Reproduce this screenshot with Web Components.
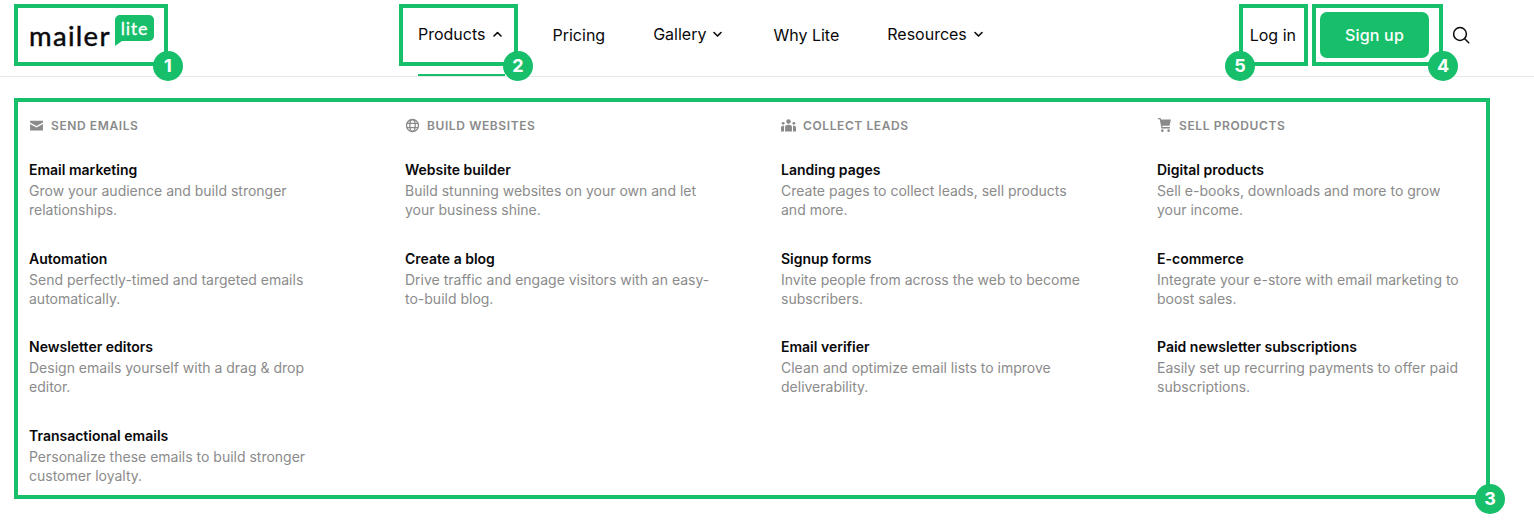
<!DOCTYPE html>
<html lang="en">
<head>
<meta charset="utf-8">
<title>MailerLite products menu</title>
<style>
  html, body { margin: 0; background: #fff; }
  body { font-family: Inter, "Liberation Sans", sans-serif; color: #09090b; position: relative; height: 520px; overflow: hidden; }
</style>
</head>
<body>
<site-header>
  <nav-item active chevron="up">Products</nav-item>
  <nav-item low>Pricing</nav-item>
  <nav-item chevron="down">Gallery</nav-item>
  <nav-item low>Why Lite</nav-item>
  <nav-item chevron="down">Resources</nav-item>
</site-header>
<mega-menu>
  <menu-column heading="Send emails" icon="mail">
    <menu-entry title="Email marketing">Grow your audience and build stronger<br>relationships.</menu-entry>
    <menu-entry title="Automation">Send perfectly-timed and targeted emails<br>automatically.</menu-entry>
    <menu-entry title="Newsletter editors">Design emails yourself with a drag &amp; drop<br>editor.</menu-entry>
    <menu-entry title="Transactional emails">Personalize these emails to build stronger<br>customer loyalty.</menu-entry>
  </menu-column>
  <menu-column heading="Build websites" icon="globe">
    <menu-entry title="Website builder">Build stunning websites on your own and let<br>your business shine.</menu-entry>
    <menu-entry title="Create a blog">Drive traffic and engage visitors with an easy-<br>to-build blog.</menu-entry>
  </menu-column>
  <menu-column heading="Collect leads" icon="people">
    <menu-entry title="Landing pages">Create pages to collect leads, sell products<br>and more.</menu-entry>
    <menu-entry title="Signup forms">Invite people from across the web to become<br>subscribers.</menu-entry>
    <menu-entry title="Email verifier">Clean and optimize email lists to improve<br>deliverability.</menu-entry>
  </menu-column>
  <menu-column heading="Sell products" icon="cart">
    <menu-entry title="Digital products">Sell e-books, downloads and more to grow<br>your income.</menu-entry>
    <menu-entry title="E-commerce">Integrate your e-store with email marketing to<br>boost sales.</menu-entry>
    <menu-entry title="Paid newsletter subscriptions">Easily set up recurring payments to offer paid<br>subscriptions.</menu-entry>
  </menu-column>
</mega-menu>

<!-- annotation frames lie over the page -->
<note-frame n="1" x="14" y="4" w="154" h="62"></note-frame>
<note-frame n="2" x="399" y="4" w="119" h="62"></note-frame>
<note-frame n="3" x="14" y="98" w="1476" h="401"></note-frame>
<note-frame n="4" x="1312" y="4" w="131" h="62"></note-frame>
<note-frame n="5" x="1239" y="4" w="69" h="62" badge="left"></note-frame>

<script>
const GREEN = '#17bf6b';

class SiteHeader extends HTMLElement {
  constructor() {
    super();
    this.attachShadow({ mode: 'open' });
  }
  connectedCallback() {
    this.shadowRoot.innerHTML = `
      <style>
        :host { display: flex; align-items: center; height: 76px; border-bottom: 1px solid #e8e8e8; box-sizing: content-box; }
        .logo { display: flex; align-items: flex-start; width: 418px; padding-left: 29px; box-sizing: border-box; height: 76px; flex: none; }
        .word { font: 400 27.5px/1 Lato, sans-serif; -webkit-text-stroke: .45px #09090b; letter-spacing: 1.3px; color: #09090b; margin-top: 22px; width: 80px; }
        .bubble { position: relative; margin: 15px 0 0 6px; width: 39px; height: 31px; }
        .bubble svg { display: block; }
        .bubble span { position: absolute; left: 0; right: 0; top: 3px; text-align: center; font: 400 18px/20px Lato, sans-serif; -webkit-text-stroke: .3px #fff; letter-spacing: .8px; color: #fff; }
        nav { display: flex; gap: 48px; flex: none; }
        .right { margin-left: auto; display: flex; align-items: center; padding: 0 64px 6px 0; }
        .login { font-size: 16px; line-height: 24px; margin: 0 24px 0 2px; }
        .signup { width: 109px; height: 46px; border-radius: 7px; background: ${GREEN}; color: #fff; font-size: 16px; font-weight: 500; display: flex; align-items: center; justify-content: center; letter-spacing: .2px; }
        .search { margin-left: 23px; display: block; }
      </style>
      <div class="logo">
        <span class="word">mailer</span>
        <span class="bubble">
          <svg width="39" height="31" viewBox="0 0 39 31"><path d="M5 0h29a5 5 0 0 1 5 5v16a5 5 0 0 1-5 5H7l-7 5V5a5 5 0 0 1 5-5z" fill="${GREEN}"/></svg>
          <span>lite</span>
        </span>
      </div>
      <nav><slot></slot></nav>
      <div class="right">
        <span class="login">Log in</span>
        <span class="signup">Sign up</span>
        <svg class="search" width="18" height="18" viewBox="0 0 18 18" fill="none" stroke="#09090b" stroke-width="1.5" stroke-linecap="round"><circle cx="8" cy="8" r="6.4"/><path d="M12.7 12.7l4 4"/></svg>
      </div>`;
  }
}

class NavItem extends HTMLElement {
  constructor() {
    super();
    this.attachShadow({ mode: 'open' });
  }
  connectedCallback() {
    const dir = this.getAttribute('chevron');
    const path = dir === 'up' ? 'M1 5l3.5-3.5L8 5' : 'M1 1.5L4.5 5 8 1.5';
    const chev = dir ? `<svg width="9" height="7" viewBox="0 0 9 7" fill="none" stroke="#09090b" stroke-width="1.6" stroke-linecap="round" stroke-linejoin="round"><path d="${path}"/></svg>` : '';
    this.shadowRoot.innerHTML = `
      <style>
        :host { display: flex; align-items: center; gap: 7px; height: 76px; font-size: 16px; position: relative; padding-right: ${dir ? 3 : 0}px; }
        .t { line-height: 24px; margin-top: ${this.hasAttribute('low') ? -6 : -8}px; }
        svg { margin-top: -8px; }
        :host([active])::after { content: ""; position: absolute; left: 0; right: 0; bottom: 0; height: 2px; background: ${GREEN}; }
      </style>
      <span class="t"><slot></slot></span>${chev}`;
  }
}

class MegaMenu extends HTMLElement {
  constructor() {
    super();
    this.attachShadow({ mode: 'open' });
    this.shadowRoot.innerHTML = `
      <style>
        :host { display: grid; grid-template-columns: repeat(4, 376px); padding: 38px 0 0 29px; }
      </style>
      <slot></slot>`;
  }
}

const ICONS = {
  mail: '<path d="M1 2.5h12v1.6L7 7.4 1 4.1z"/><path d="M1 5.6l6 3.3 6-3.3v6H1z"/>',
  globe: '<g fill="none" stroke="currentColor" stroke-width="1.2"><circle cx="7" cy="7" r="5.6"/><ellipse cx="7" cy="7" rx="2.5" ry="5.6"/><path d="M1.6 5h10.8M1.6 9h10.8"/></g>',
  people: '<circle cx="7" cy="3.2" r="2.1"/><path d="M3.8 12.5V8.4c0-1.4 1.2-2.2 3.2-2.2s3.2.8 3.2 2.2v4.1z"/><circle cx="2" cy="5" r="1.3"/><circle cx="12" cy="5" r="1.3"/><path d="M0 12.5V8.8c0-1 .8-1.6 2.8-1.6v5.3zM14 12.5V8.8c0-1-.8-1.6-2.8-1.6v5.3z"/>',
  cart: '<path d="M1 0h2.3l.5 1.5H13l-1.3 5.8H4.9l.3 1.2h6.9v1.2H4.2L2.5 1.2H1z"/><circle cx="5" cy="11.8" r="1.2"/><circle cx="10.8" cy="11.8" r="1.2"/>'
};

class MenuColumn extends HTMLElement {
  constructor() {
    super();
    this.attachShadow({ mode: 'open' });
  }
  connectedCallback() {
    const icon = this.getAttribute('icon');
    this.shadowRoot.innerHTML = `
      <style>
        :host { display: block; }
        h4 { margin: 0 0 25px; display: flex; align-items: center; gap: 7px; height: 20px; font-size: 12px; font-weight: 600; letter-spacing: .6px; text-transform: uppercase; color: #8a8a8a; }
        svg { flex: none; display: block; }
        .list { display: flex; flex-direction: column; gap: 29.7px; }
      </style>
      <h4><svg width="15" height="15" viewBox="0 0 14 14" fill="currentColor">${ICONS[icon]}</svg>${this.getAttribute('heading')}</h4>
      <div class="list"><slot></slot></div>`;
  }
}

class MenuEntry extends HTMLElement {
  constructor() {
    super();
    this.attachShadow({ mode: 'open' });
  }
  connectedCallback() {
    this.shadowRoot.innerHTML = `
      <style>
        :host { display: block; }
        .title { font-size: 14px; font-weight: 600; line-height: 20px; color: #09090b; margin-bottom: 1px; }
        .desc { font-size: 14px; line-height: 19px; color: #8b8b8b; width: 340px; white-space: nowrap; }
      </style>
      <div class="title">${this.getAttribute('title')}</div>
      <div class="desc"><slot></slot></div>`;
  }
}

class NoteFrame extends HTMLElement {
  constructor() {
    super();
    this.attachShadow({ mode: 'open' });
  }
  connectedCallback() {
    const g = n => this.getAttribute(n);
    const left = g('badge') === 'left';
    this.shadowRoot.innerHTML = `
      <style>
        :host { position: absolute; display: block; box-sizing: border-box; left: ${g('x')}px; top: ${g('y')}px; width: ${g('w')}px; height: ${g('h')}px; border: 4px solid ${GREEN}; }
        b { position: absolute; width: 30px; height: 30px; border-radius: 50%; background: ${GREEN}; color: #fff; font: 700 18px/30px Inter, sans-serif; text-align: center; bottom: -19px; ${left ? 'left: -18px' : 'right: -19px'}; }
      </style>
      <b>${g('n')}</b>`;
  }
}

customElements.define('site-header', SiteHeader);
customElements.define('nav-item', NavItem);
customElements.define('mega-menu', MegaMenu);
customElements.define('menu-column', MenuColumn);
customElements.define('menu-entry', MenuEntry);
customElements.define('note-frame', NoteFrame);
</script>
</body>
</html>
